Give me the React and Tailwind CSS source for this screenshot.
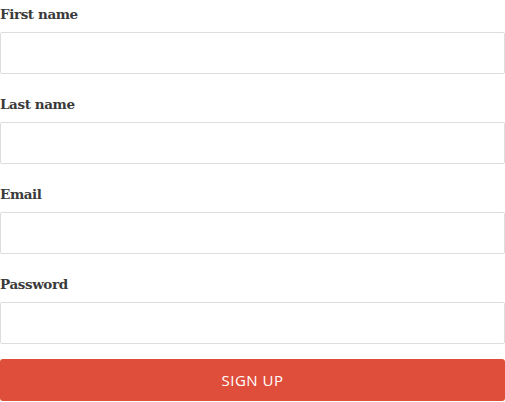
import React from 'react';

const fields = [
  { label: 'First name', type: 'text' },
  { label: 'Last name', type: 'text' },
  { label: 'Email', type: 'email' },
  { label: 'Password', type: 'password' },
];

export default function App() {
  return (
    <div className="w-[505px] bg-white">
      <form className="flex flex-col">
        {fields.map((f) => (
          <div key={f.label} className="flex flex-col pt-[3px] pb-[16px]">
            <label className="h-[22px] leading-[22px] text-[13.5px] font-bold text-[#3a3a3a] font-['DejaVu_Serif',serif] tracking-[-0.4px]">
              {f.label}
            </label>
            <input
              type={f.type}
              className="mt-[7px] h-[42px] w-full rounded-[2px] border border-[#dddddd] bg-white px-3 outline-none"
            />
          </div>
        ))}
        <button
          type="button"
          className="-mt-[1px] h-[42px] w-full rounded-[3px] bg-[#df4e3a] text-white text-[15px] tracking-[0.5px] font-['Open_Sans',sans-serif]"
        >
          SIGN UP
        </button>
      </form>
    </div>
  );
}
